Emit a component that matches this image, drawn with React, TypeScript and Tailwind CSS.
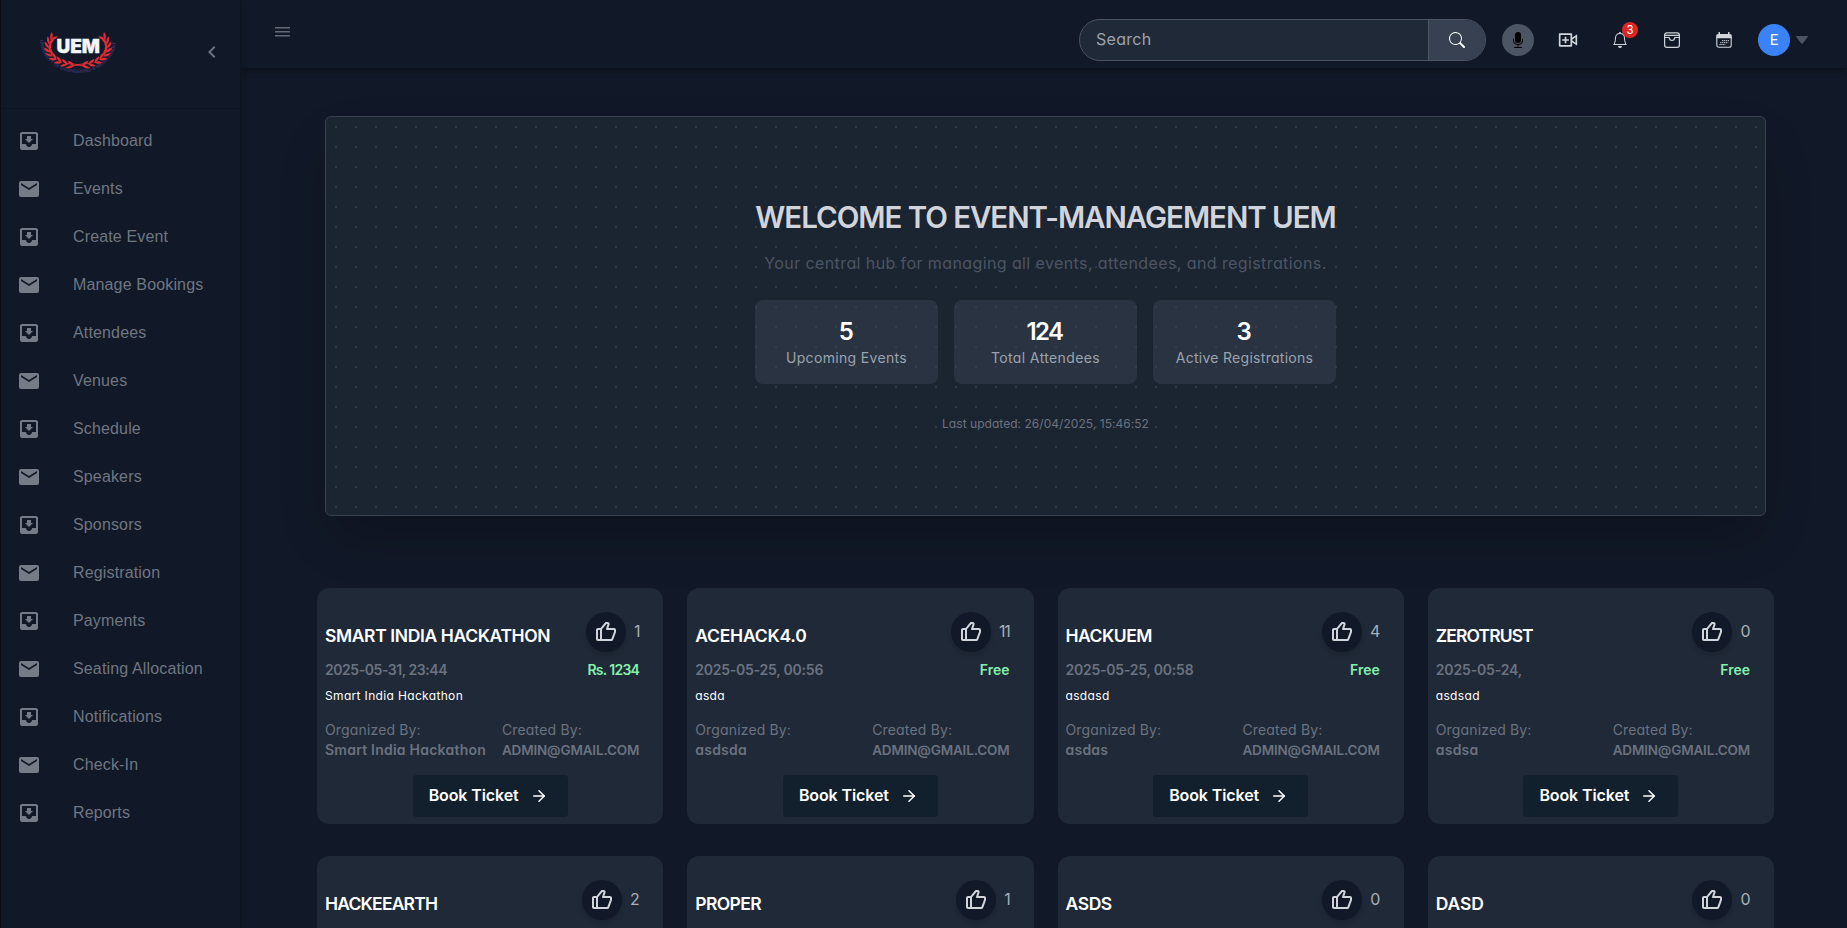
import { BiLike } from "react-icons/bi";
import { BsBell, BsMicFill, BsSearch } from "react-icons/bs";
import { FiArrowRight } from "react-icons/fi";
import { MdChevronLeft, MdMail, MdMoveToInbox } from "react-icons/md";
import { RiVideoAddLine } from "react-icons/ri";

const menu = [
  "Dashboard",
  "Events",
  "Create Event",
  "Manage Bookings",
  "Attendees",
  "Venues",
  "Schedule",
  "Speakers",
  "Sponsors",
  "Registration",
  "Payments",
  "Seating Allocation",
  "Notifications",
  "Check-In",
  "Reports",
];

type EventDetails = {
  date: string;
  dateTracking: string;
  price: string;
  description: string;
  organizer: string;
};

type EventItem = {
  title: string;
  tracking: string;
  likes: number;
  details?: EventDetails;
};

const events: EventItem[] = [
  {
    title: "SMART INDIA HACKATHON",
    tracking: "tracking-[-0.38px]",
    likes: 1,
    details: { date: "2025-05-31, 23:44", dateTracking: "tracking-[-0.45px]", price: "Rs. 1234", description: "Smart India Hackathon", organizer: "Smart India Hackathon" },
  },
  {
    title: "ACEHACK4.0",
    tracking: "tracking-[-0.22px]",
    likes: 11,
    details: { date: "2025-05-25, 00:56", dateTracking: "tracking-[-0.23px]", price: "Free", description: "asda", organizer: "asdsda" },
  },
  {
    title: "HACKUEM",
    tracking: "tracking-[-0.5px]",
    likes: 4,
    details: { date: "2025-05-25, 00:58", dateTracking: "tracking-[-0.23px]", price: "Free", description: "asdasd", organizer: "asdas" },
  },
  {
    title: "ZEROTRUST",
    tracking: "tracking-[-0.9px]",
    likes: 0,
    details: { date: "2025-05-24,", dateTracking: "tracking-[-0.15px]", price: "Free", description: "asdsad", organizer: "asdsa" },
  },
  { title: "HACKEEARTH", tracking: "tracking-[-0.8px]", likes: 2 },
  { title: "PROPER", tracking: "tracking-[-0.6px]", likes: 1 },
  { title: "ASDS", tracking: "tracking-[-0.4px]", likes: 0 },
  { title: "DASD", tracking: "tracking-[-0.1px]", likes: 0 },
];

const stats = [
  { value: "5", label: "Upcoming Events", tracking: "tracking-[0.33px]" },
  { value: "124", label: "Total Attendees", tracking: "tracking-[0.38px]" },
  { value: "3", label: "Active Registrations", tracking: "tracking-[0.28px]" },
];

function LaurelBranch() {
  const leaves = [];
  for (let i = 0; i < 9; i++) {
    const a = ((204 - i * 13.2) * Math.PI) / 180;
    const x = 39 + 29.5 * Math.cos(a);
    const y = 17 + 18.5 * Math.sin(a);
    const tangent = (Math.atan2(-18.5 * Math.cos(a), 29.5 * Math.sin(a)) * 180) / Math.PI;
    leaves.push(
      <g key={i} transform={`translate(${x} ${y}) rotate(${tangent + 180})`}>
        <path d="M-.6 .3C.6 -2.400 3.400 -3.900 6.600 -3.600C5.400 -1.400 3 .4 -.6 .3Z" />
        <path d="M-.6 -.3C.6 2.400 3.400 3.900 6.600 3.600C5.400 1.400 3 -.4 -.6 -.3Z" />
      </g>,
    );
  }
  return <g>{leaves}</g>;
}

function Logo() {
  return (
    <svg width="78" height="46" viewBox="0 0 78 46" className="overflow-visible">
      <path id="logo-arc" d="M1 10A38 33 0 0 0 77 10" fill="none" />
      <text fill="#3a3363" fontSize="4.8" fontWeight="700" fontFamily="Liberation Sans, sans-serif">
        <textPath href="#logo-arc" textLength="109">UNIVERSITY OF ENGINEERING &amp; MANAGEMENT</textPath>
      </text>
      <g fill="#dc2c36">
        <LaurelBranch />
        <g transform="translate(78 0) scale(-1 1)">
          <LaurelBranch />
        </g>
      </g>
      <path d="M27 37.500C33 36.500 38 34 50 33.500M51 37.500C45 36.500 40 34 28 33.500" stroke="#dc2c36" strokeWidth="1.1" fill="none" />
      <text x="17.500" y="23" fill="#f4f4fb" stroke="#f4f4fb" strokeWidth="0.3" fontSize="18.6" fontWeight="900" fontFamily="Inter, sans-serif" textLength="43.500" lengthAdjust="spacingAndGlyphs">
        UEM
      </text>
    </svg>
  );
}

function ArchiveIcon() {
  return (
    <svg width="16" height="16" viewBox="0 0 16 16" fill="none" stroke="currentColor" strokeWidth="1.2">
      <rect x="0.6" y="0.9" width="14.8" height="14.4" rx="2.4" />
      <path d="M1 3.300H15M1 5.500H5.200C5.400 7.500 6.500 8.500 8 8.500S10.600 7.500 10.800 5.500H15" />
    </svg>
  );
}

function CalendarIcon() {
  return (
    <svg width="16" height="16" viewBox="0 0 16 16" fill="none" stroke="currentColor">
      <path d="M0.200 6.200V3.800A1.900 1.900 0 0 1 2.100 1.900H2.500V0H4V1.900H12V0H13.500V1.900H13.900A1.900 1.900 0 0 1 15.800 3.800V6.200Z" fill="currentColor" stroke="none" />
      <path d="M0.800 5V13.300A2 2 0 0 0 2.800 15.300H13.200A2 2 0 0 0 15.200 13.300V5" strokeWidth="1.100" />
      <path d="M6 8.700H13M4.200 10.700H12.200M3.400 12.600H9.500" strokeWidth="1" strokeDasharray="1.300 0.600" />
    </svg>
  );
}

function Sidebar() {
  return (
    <aside className="flex w-[241px] shrink-0 flex-col border-r border-l border-r-[#0f1520] border-l-[#0b0d10] bg-[#111827] shadow-[0_0_6px_rgba(0,0,0,0.12)]">
      <div className="flex h-[109px] items-start justify-between border-b border-[#0f1520] pr-4 pl-[38px]">
        <div className="pt-[30px]">
          <Logo />
        </div>
        <MdChevronLeft className="mt-10 size-6 text-[#6b7280]" />
      </div>
      <ul className="flex flex-col pt-2">
        {menu.map((label, i) => (
          <li key={label} className="flex h-12 items-center pl-4 text-[#757b87]">
            <span className="w-14">{i % 2 === 0 ? <MdMoveToInbox className="size-6" /> : <MdMail className="size-6" />}</span>
            <span className="font-['Liberation_Sans',sans-serif] text-base tracking-[0.15px] text-[#6f7682]">{label}</span>
          </li>
        ))}
      </ul>
    </aside>
  );
}

function Header() {
  return (
    <header className="relative flex h-[68px] shrink-0 items-center bg-[#111827] pr-[39px] pl-[34px] shadow-[0_3px_6px_rgba(0,0,0,0.3)]">
      <svg width="15" height="10" viewBox="0 0 15 10" className="-mt-1" fill="#646a76">
        <rect width="15" height="1.5" />
        <rect y="4" width="15" height="1.5" />
        <rect y="8" width="15" height="1.5" />
      </svg>
      <div className="ml-auto flex items-center pt-3">
        <div className="flex h-[42px] w-[407px] overflow-hidden rounded-full border border-[#4b5563] bg-[#1f2937]">
          <div className="flex flex-1 items-center pb-[2px] pl-4 text-base tracking-[0.3px] text-[#9ca3af]">Search</div>
          <div className="flex w-[57px] items-center justify-center border-l border-[#4b5563] bg-[#374151] text-white">
            <BsSearch className="size-4" />
          </div>
        </div>
        <div className="ml-4 flex size-8 items-center justify-center rounded-full bg-[#4b5563] text-black">
          <BsMicFill className="size-4" />
        </div>
        <div className="ml-6 flex items-center gap-8 text-[#d1d5db]">
          <RiVideoAddLine className="size-5" />
          <div className="relative flex w-5 justify-center">
            <BsBell className="size-4" />
            <span className="absolute -top-[10px] left-[12px] flex size-4 items-center justify-center rounded-full bg-[#dc2626] font-['Roboto',sans-serif] text-xs leading-none text-white">3</span>
          </div>
          <div className="flex w-5 justify-center">
            <ArchiveIcon />
          </div>
          <div className="flex w-5 justify-center">
            <CalendarIcon />
          </div>
        </div>
        <div className="ml-6 flex size-8 items-center justify-center rounded-full bg-[#3b82f6] font-['Roboto',sans-serif] text-[15px] text-white">E</div>
        <svg width="12" height="8" viewBox="0 0 12 8" className="ml-[6px]" fill="#4b5563">
          <path d="M.6 0H11.400Q12.300 .200 11.700 1L6.700 7.500Q6 8.200 5.300 7.500L.3 1Q-.3 .2 .6 0Z" />
        </svg>
      </div>
    </header>
  );
}

function Hero() {
  return (
    <section className="mx-2 flex h-[400px] flex-col items-center justify-center rounded-md border border-[#374151] bg-[#1b2431] bg-[radial-gradient(circle,#2f3846_1px,transparent_1px)] bg-[length:20px_20px] shadow-[0_25px_50px_-12px_rgba(0,0,0,0.25)]">
      <h1 className="-mt-px mb-px text-[29.5px] leading-9 font-semibold tracking-[-1.05px] text-[#d1d5db]">WELCOME TO EVENT-MANAGEMENT UEM</h1>
      <p className="mt-[15px] mb-px text-base tracking-[0.4px] text-[#4b5563]">Your central hub for managing all events, attendees, and registrations.</p>
      <div className="mt-6 grid w-[581px] grid-cols-3 gap-4">
        {stats.map((s) => (
          <div key={s.label} className="rounded-lg bg-[#374151]/50 p-4 text-center">
            <div className="pr-[2px] text-2xl leading-8 font-semibold tracking-[-1.5px] text-white">{s.value}</div>
            <div className={`text-sm leading-5 whitespace-nowrap text-[#9ca3af] ${s.tracking}`}>{s.label}</div>
          </div>
        ))}
      </div>
      <p className="mt-8 text-xs leading-4 tracking-[0.04px] text-[#6b7280]">Last updated: 26/04/2025, 15:46:52</p>
    </section>
  );
}

function EventBody({ details }: { details: EventDetails }) {
  return (
    <>
      <div className="mt-2 flex justify-between text-sm leading-5">
        <span className={`font-semibold text-[#6b7280] ${details.dateTracking}`}>{details.date}</span>
        <span className={details.price === "Free" ? "font-semibold text-[#86efac]" : "font-semibold tracking-[-0.7px] text-[#86efac]"}>{details.price}</span>
      </div>
      <p className="mt-2 text-xs leading-4 tracking-[0.34px] text-white">{details.description}</p>
      <div className="mt-4 flex justify-between text-sm leading-5 text-[#6b7280]">
        <div>
          <div className="tracking-[0.15px]">Organized By:</div>
          <div className="font-semibold tracking-[0.23px]">{details.organizer}</div>
        </div>
        <div>
          <div className="tracking-[0.17px]">Created By:</div>
          <div className="text-[13.5px] font-semibold tracking-[-0.16px]">ADMIN@GMAIL.COM</div>
        </div>
      </div>
      <button className="mt-[15px] -mr-4 flex h-[42px] w-[155px] shrink-0 items-center justify-between self-center rounded bg-[#11202c] pr-5 pl-4 text-base font-semibold tracking-[-0.1px] whitespace-nowrap text-white">
        <span className="pb-[2px]">Book Ticket</span>
        <FiArrowRight className="size-[18px]" />
      </button>
    </>
  );
}

function EventCard({ event }: { event: EventItem }) {
  return (
    <article className="flex h-[236px] flex-col rounded-xl bg-[#1f2937] pt-6 pr-6 pl-2">
      <div className="flex h-10 items-center justify-between">
        <h2 className={`pt-[7px] text-[17.5px] leading-7 font-semibold whitespace-nowrap text-white ${event.tracking}`}>{event.title}</h2>
        <div className="flex items-center gap-2">
          <span className="flex size-10 items-center justify-center rounded-full bg-[#111827] text-[#d1d5db] shadow-md">
            <BiLike className="size-6" />
          </span>
          <span className={event.likes === 1 || event.likes === 11 ? "pb-[2px] text-base tracking-[-1.3px] text-[#a8afba]" : "pb-[2px] text-base tracking-[-0.5px] text-[#a8afba]"}>{event.likes}</span>
        </div>
      </div>
      {event.details && <EventBody details={event.details} />}
    </article>
  );
}

export default function App() {
  return (
    <div className="flex h-[928px] w-[1847px] overflow-hidden bg-[#111827] font-['Inter',sans-serif] [font-feature-settings:'cv11']">
      <div className="relative z-10 flex">
        <Sidebar />
      </div>
      <div className="flex min-w-0 flex-1 flex-col">
        <Header />
        <main className="min-h-0 flex-1 overflow-hidden pt-12 pr-[73px] pl-[76px]">
          <Hero />
          <div className="mt-[72px] grid grid-cols-4 gap-x-6 gap-y-8">
            {events.map((e) => (
              <EventCard key={e.title} event={e} />
            ))}
          </div>
        </main>
      </div>
    </div>
  );
}
